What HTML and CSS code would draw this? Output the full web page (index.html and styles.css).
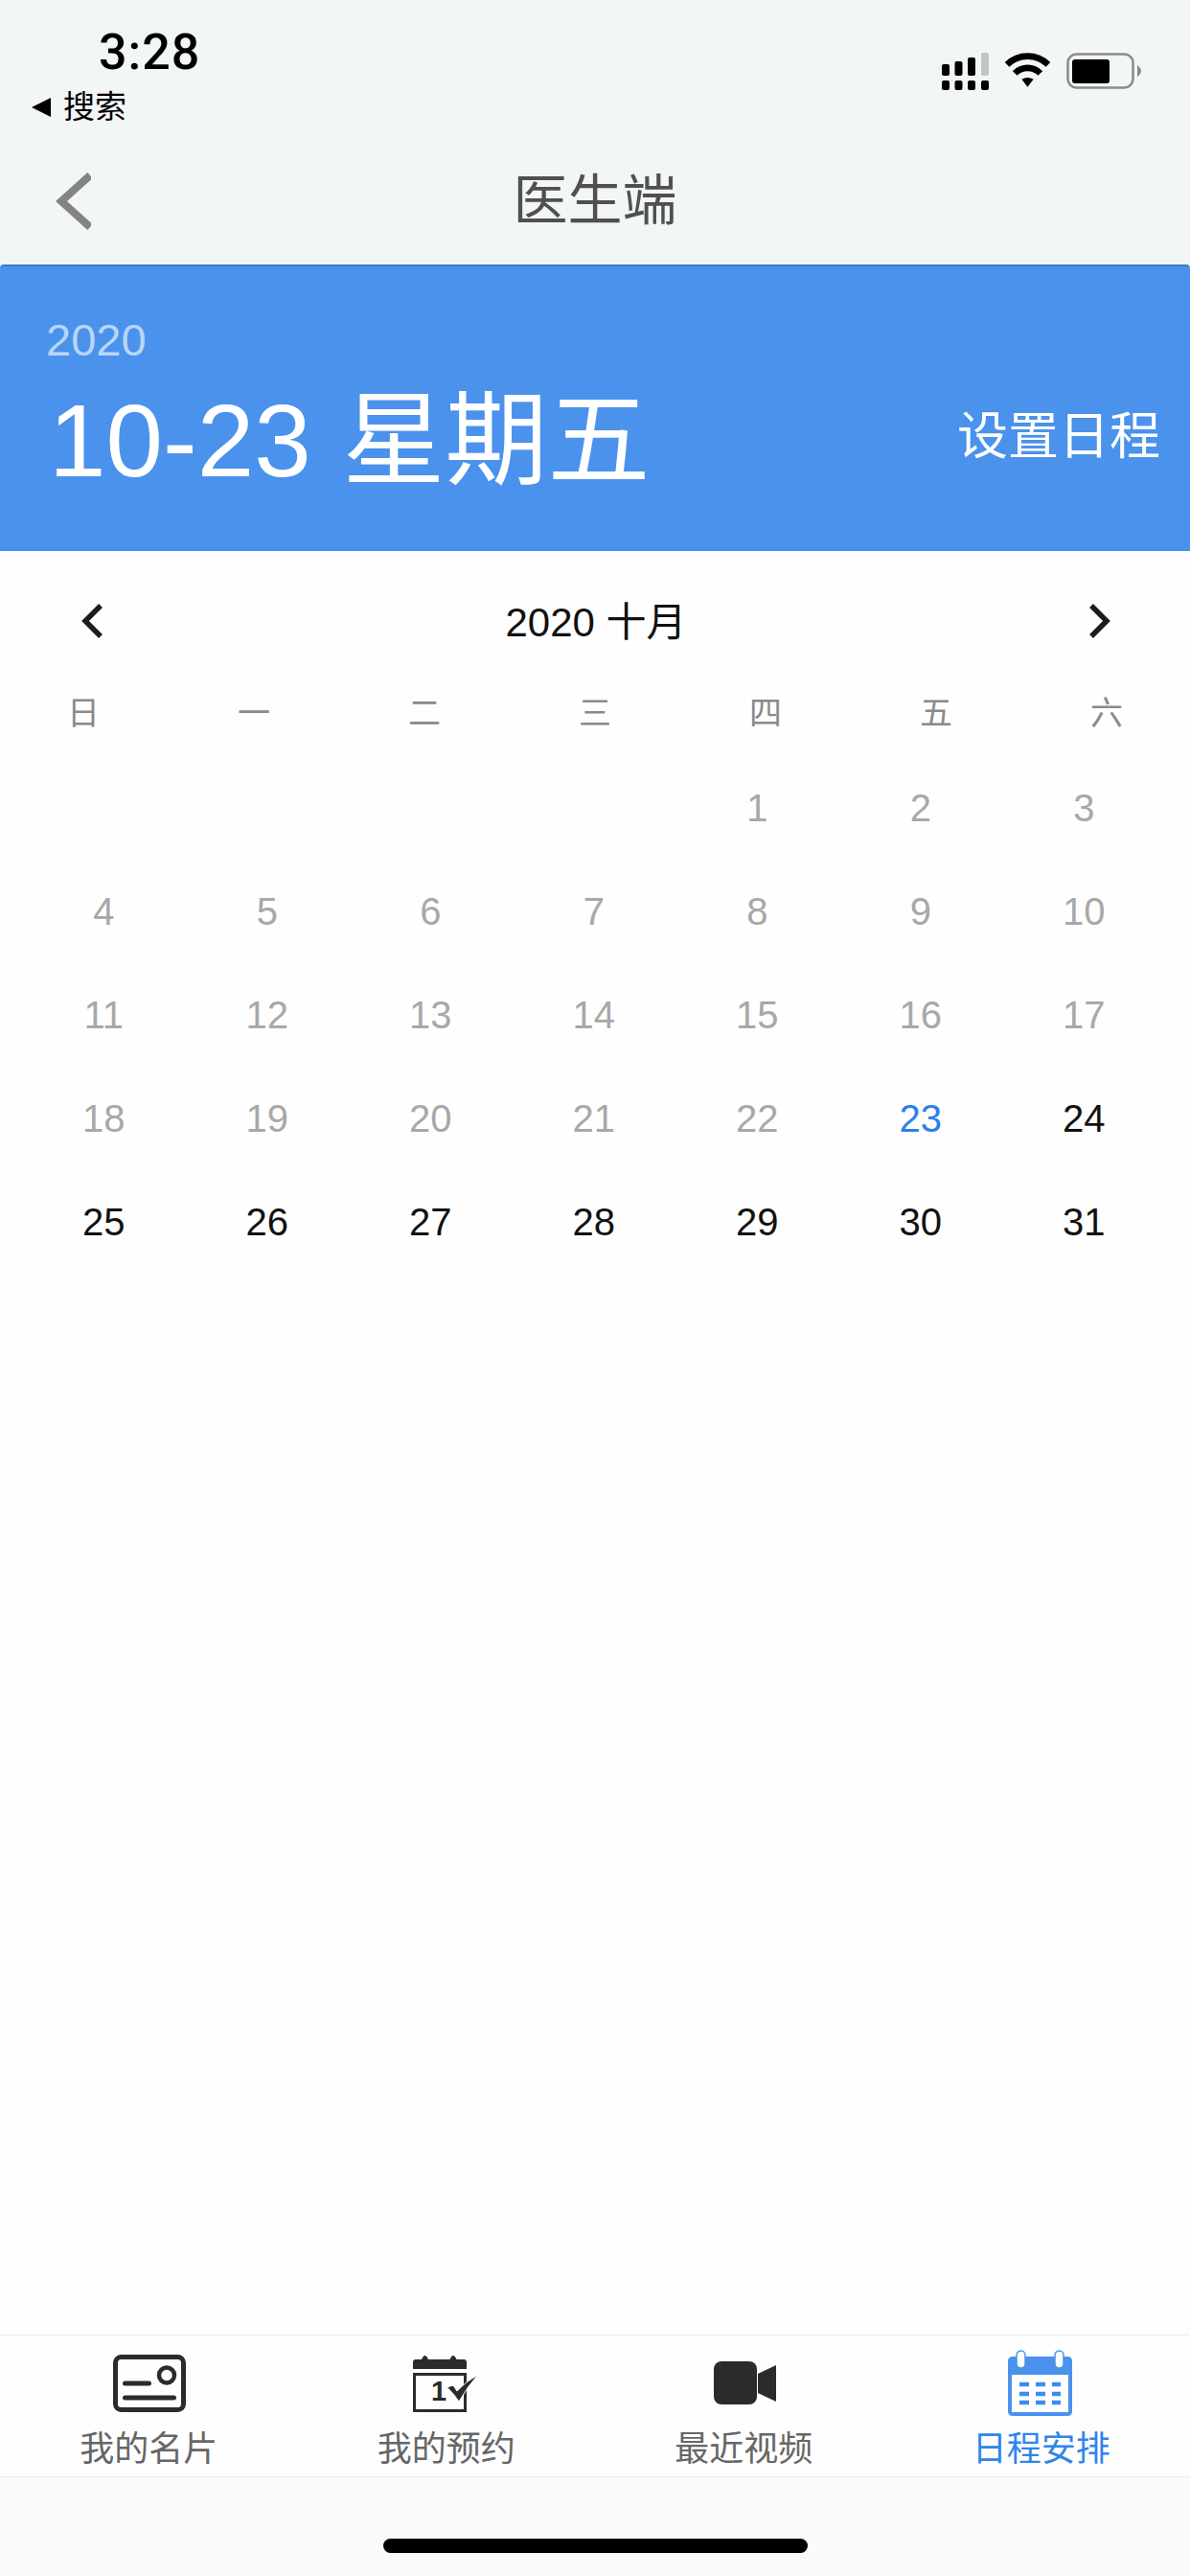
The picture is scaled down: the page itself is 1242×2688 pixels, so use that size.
FILE: index.html
```html
<!DOCTYPE html>
<html lang="zh-CN">
<head>
    <meta charset="UTF-8">
    <meta name="viewport" content="width=device-width, initial-scale=1.0">
    <title>医生端</title>
    <link rel="stylesheet" href="styles.css">
</head>
<body>
    <div class="page">
        <header class="top-header">
            <div class="status-bar">
                <div class="status-left">
                    <div class="status-time">3:28</div>
                    <div class="status-back"><span class="back-triangle"></span>搜索</div>
                </div>
                <div class="status-icons">
                    <svg width="49" height="39" viewBox="0 0 49 39">
                        <rect x="0" y="12" width="8" height="12" rx="2" fill="#000"/>
                        <rect x="13.5" y="9" width="8" height="15" rx="2" fill="#000"/>
                        <rect x="27" y="5" width="8" height="19" rx="2" fill="#000"/>
                        <rect x="41" y="0" width="8" height="24" rx="2" fill="#c2c4c3"/>
                        <rect x="0" y="29" width="8" height="10" rx="2" fill="#000"/>
                        <rect x="13.5" y="29" width="8" height="10" rx="2" fill="#000"/>
                        <rect x="27" y="29" width="8" height="10" rx="2" fill="#000"/>
                        <rect x="41" y="29" width="8" height="10" rx="2" fill="#000"/>
                    </svg>
                    <svg width="49" height="36" viewBox="0 0 48 35">
                        <path d="M3 12 A30 30 0 0 1 45 12" fill="none" stroke="#000" stroke-width="6.5"/>
                        <path d="M11 21 A18 18 0 0 1 37 21" fill="none" stroke="#000" stroke-width="6.5"/>
                        <path d="M18 27 Q24 23.5 30 27 L24 35 Z" fill="#000"/>
                    </svg>
                    <svg width="78" height="38" viewBox="0 0 78 38">
                        <rect x="1.5" y="1.5" width="68" height="35" rx="9" fill="none" stroke="#8a8a8a" stroke-width="2.5"/>
                        <rect x="6" y="7" width="39" height="25" rx="3" fill="#000"/>
                        <path d="M74 13 Q78 16 78 19 Q78 22 74 25 Z" fill="#8a8a8a"/>
                    </svg>
                </div>
            </div>
            <div class="nav-bar">
                <svg class="nav-back" width="38" height="66" viewBox="0 0 38 66">
                    <path d="M37 6 L7 33 L37 60" fill="none" stroke="#848484" stroke-width="8"/>
                </svg>
                <div class="nav-title">医生端</div>
                <div></div>
            </div>
        </header>

        <section class="date-banner">
            <div>
                <div class="banner-year">2020</div>
                <div class="banner-date">10-23 星期五</div>
            </div>
            <div class="banner-action">设置日程</div>
        </section>

        <main class="calendar">
            <div class="month-nav">
                <svg width="26" height="38" viewBox="0 0 26 38">
                    <path d="M22 3 L6 19 L22 35" fill="none" stroke="#1c1c1c" stroke-width="5.5"/>
                </svg>
                <div class="month-title">2020 十月</div>
                <svg width="26" height="38" viewBox="0 0 26 38">
                    <path d="M4 3 L20 19 L4 35" fill="none" stroke="#1c1c1c" stroke-width="5.5"/>
                </svg>
            </div>
            <div class="week-row">
                <div>日</div><div>一</div><div>二</div><div>三</div><div>四</div><div>五</div><div>六</div>
            </div>
            <div class="day-grid">
                <div></div><div></div><div></div><div></div>
                <div class="day past">1</div><div class="day past">2</div><div class="day past">3</div>
                <div class="day past">4</div><div class="day past">5</div><div class="day past">6</div><div class="day past">7</div><div class="day past">8</div><div class="day past">9</div><div class="day past">10</div>
                <div class="day past">11</div><div class="day past">12</div><div class="day past">13</div><div class="day past">14</div><div class="day past">15</div><div class="day past">16</div><div class="day past">17</div>
                <div class="day past">18</div><div class="day past">19</div><div class="day past">20</div><div class="day past">21</div><div class="day past">22</div><div class="day today">23</div><div class="day">24</div>
                <div class="day">25</div><div class="day">26</div><div class="day">27</div><div class="day">28</div><div class="day">29</div><div class="day">30</div><div class="day">31</div>
            </div>
        </main>

        <nav class="tab-bar">
            <div class="tab-item">
                <svg width="80" height="70" viewBox="0 0 80 70">
                    <rect x="5.5" y="7.5" width="71" height="55" rx="6" fill="none" stroke="#2b2b2b" stroke-width="5"/>
                    <circle cx="59" cy="26.5" r="8" fill="none" stroke="#2b2b2b" stroke-width="4.5"/>
                    <path d="M15.5 35 H40.5 M15.5 50 H66.5" fill="none" stroke="#2b2b2b" stroke-width="5" stroke-linecap="round"/>
                </svg>
                <div class="tab-label">我的名片</div>
            </div>
            <div class="tab-item">
                <svg width="80" height="70" viewBox="0 0 80 70">
                    <path d="M5 13 Q5 10 8 10 H14 Q17.5 2 21 10 H43.5 Q47 2 50.5 10 H58 Q61 10 61 13 V20 H5 Z" fill="#2b2b2b"/>
                    <path d="M6.5 25.5 H59.5 V63.5 H6.5 Z" fill="none" stroke="#2b2b2b" stroke-width="3"/>
                    <text class="icon-digit" x="24" y="53">1</text>
                    <path d="M40.5 39 L47 37 L51 43 Q60 33 73 26 Q62 38 53 54 Q48 46 40.5 39 Z" fill="#2b2b2b" stroke="#fff" stroke-width="1"/>
                </svg>
                <div class="tab-label">我的预约</div>
            </div>
            <div class="tab-item">
                <svg width="80" height="70" viewBox="0 0 80 70">
                    <rect x="9" y="12" width="45" height="45" rx="8" fill="#2b2b2b"/>
                    <path d="M55 25 L74 16 V54 L55 45 Z" fill="#2b2b2b"/>
                </svg>
                <div class="tab-label">最近视频</div>
            </div>
            <div class="tab-item active">
                <svg width="80" height="70" viewBox="0 0 80 70">
                    <path d="M10 7 Q5 7 5 12 V64 Q5 69 10 69 H67 Q72 69 72 64 V12 Q72 7 67 7 Z" fill="#4a92ec"/>
                    <rect x="9" y="26" width="59" height="39" fill="#fff"/>
                    <rect x="14" y="1" width="9" height="18" rx="4.5" fill="#fff" stroke="#4a92ec" stroke-width="1.5"/>
                    <rect x="54" y="1" width="9" height="18" rx="4.5" fill="#fff" stroke="#4a92ec" stroke-width="1.5"/>
                    <path d="M17 36 H27 M34 36 H44 M51 36 H60 M17 46 H27 M34 46 H44 M51 46 H60 M17 55 H27 M34 55 H44 M51 55 H60" fill="none" stroke="#3a8ded" stroke-width="4.5"/>
                </svg>
                <div class="tab-label">日程安排</div>
            </div>
        </nav>

        <div class="home-area">
            <div class="home-indicator"></div>
        </div>
    </div>
</body>
</html>
```

FILE: styles.css
```css
body {
    margin: 0;
    font-family: "Liberation Sans", "Noto Sans CJK SC", sans-serif;
    background-color: #fefefe;
}

.page {
    width: 1242px;
    height: 2688px;
    display: flex;
    flex-direction: column;
    overflow: hidden;
}

.top-header {
    height: 276px;
    background-color: #f2f6f5;
}

.status-bar {
    height: 148px;
    display: flex;
    justify-content: space-between;
}

.status-time {
    margin: 25px 0 0 103px;
    font-family: Roboto, sans-serif;
    font-weight: 500;
    font-size: 52px;
    line-height: 60px;
    letter-spacing: 1px;
    color: #000;
}

.status-back {
    display: flex;
    align-items: center;
    margin: 7px 0 0 33px;
    font-size: 33px;
    line-height: 40px;
    color: #000;
}

.back-triangle {
    width: 0;
    height: 0;
    margin-right: 13px;
    border-top: 10px solid transparent;
    border-bottom: 10px solid transparent;
    border-right: 20px solid #000;
}

.status-icons {
    display: flex;
    align-items: flex-start;
    gap: 16px;
    padding: 55px 51px 0 0;
}

.nav-bar {
    height: 128px;
    display: grid;
    grid-template-columns: 1fr auto 1fr;
    align-items: center;
}

.nav-back {
    margin: 0 0 4px 57px;
}

.nav-title {
    font-size: 57px;
    line-height: 120px;
    margin-bottom: 6px;
    color: #505050;
}

.date-banner {
    height: 299px;
    padding: 0 31px 0 48px;
    box-sizing: border-box;
    display: flex;
    justify-content: space-between;
    align-items: center;
    background-color: #4a92ec;
    border-top: 2px solid #3c7cc4;
    border-radius: 4px 4px 0 0;
    color: #fff;
}

.banner-year {
    font-size: 47px;
    line-height: 56px;
    margin-top: -7px;
    color: #b9d5f8;
}

.banner-date {
    font-size: 107px;
    line-height: 120px;
    margin: 17px 0 0 3px;
    word-spacing: 3px;
}

.banner-action {
    font-size: 53px;
    line-height: 70px;
    margin-top: 58px;
}

.calendar {
    flex: 1;
}

.month-nav {
    height: 72px;
    margin-top: 37px;
    padding: 0 81px 0 83px;
    display: flex;
    justify-content: space-between;
    align-items: center;
}

.month-title {
    font-size: 42px;
    padding-bottom: 5px;
    color: #111;
}

.week-row {
    display: grid;
    grid-template-columns: repeat(7, 178px);
    margin: 30px 0 0 -2px;
    height: 58px;
    font-size: 34px;
    line-height: 60px;
    text-align: center;
    color: #8a8a8a;
}

.day-grid {
    display: grid;
    grid-template-columns: repeat(7, 170.5px);
    grid-auto-rows: 108px;
    margin-top: 17px;
    padding-left: 23px;
}

.day {
    font-size: 40px;
    line-height: 108px;
    text-align: center;
    color: #111;
}

.day.past {
    color: #a8a8a8;
}

.day.today {
    color: #2a80ea;
}

.tab-bar {
    height: 149px;
    box-sizing: border-box;
    display: grid;
    grid-template-columns: repeat(4, 1fr);
    border-top: 1px solid #ececec;
    border-bottom: 1px solid #ececec;
}

.tab-item {
    display: flex;
    flex-direction: column;
    align-items: center;
    padding-top: 15px;
}

.tab-label {
    margin-top: 16px;
    font-size: 36px;
    line-height: 36px;
    color: #666;
}

.tab-item.active .tab-label {
    color: #2f85ea;
}

.icon-digit {
    font-family: "Liberation Sans", sans-serif;
    font-weight: bold;
    font-size: 29px;
    fill: #2b2b2b;
}

.home-area {
    height: 103px;
    background-color: #fafafa;
    display: flex;
    justify-content: center;
}

.home-indicator {
    width: 443px;
    height: 15px;
    margin-top: 64px;
    border-radius: 8px;
    background-color: #000;
}
```
